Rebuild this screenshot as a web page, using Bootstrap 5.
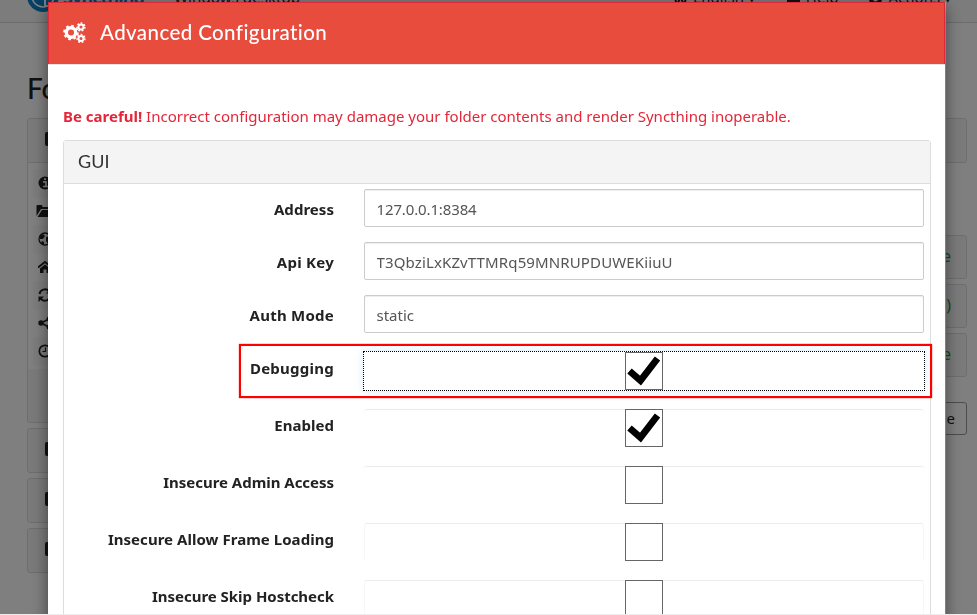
<!DOCTYPE html>
<html lang="en">
<head>
<meta charset="utf-8">
<meta name="viewport" content="width=device-width, initial-scale=1">
<title>Advanced Configuration</title>
<link href="https://cdn.jsdelivr.net/npm/bootstrap@5.3.0/dist/css/bootstrap.min.css" rel="stylesheet">
<style>
html,body{height:615px;overflow:hidden}
body{font-family:"Noto Sans","Open Sans",sans-serif;font-size:15px;color:#222;background:#fff}
.topbar{height:23px;background:#f8f8f8;border-bottom:1px solid #d8d8d8;padding:0 25px 0 27px;overflow:hidden}
.topbar .strip{margin-top:-20px;height:32px;white-space:nowrap}
.topbar .strip span{padding-top:2px}
.brandname{color:#0882c8;font-weight:700;font-size:18px;width:111px;letter-spacing:-.9px}
.host{font-size:15.2px}
.menuitem svg{width:15px;height:15px;margin-right:5px}
.menus{gap:30px}
.page{padding:0 10px 0 27px}
.title-lg{font-family:Lato,sans-serif;font-size:28px;line-height:36px;margin-top:47px;margin-bottom:12px}
.leftcol,.rightcol{width:455px}
.box{border:1px solid #ddd;border-radius:3px;background:#f5f5f5;height:45px;margin-bottom:5px;padding:0 15px 0 17px}
.rightcol .box{padding-bottom:3px}
.box.tall{height:305px;padding:0}
.box .chip{width:14px;height:14px;border-radius:2px;background:#222;margin-bottom:3px}
.boxtop{height:43px;padding:0 17px}
.facts{background:#fff;border-top:1px solid #ddd;height:207px;padding:6px 5px 0}
.facts>div{height:28px;padding:0 5px}
.facts>div:nth-child(odd){background:#f9f9f9}
.facts svg{width:14px;height:14px}
.rightcol{padding-top:95px}
.box.gapabove{margin-top:72px}
.rightcol .box+.box{height:44px}
.state{color:#1a9c3c;font-size:16px}
.devbtn{height:33px;width:150px;border:1px solid #999;border-radius:3px;padding-right:11px;margin-top:25px}
.shade{background:rgba(0,0,0,.5);z-index:1040}
.dialog-area{z-index:1050;padding:2px 32px 0 48px;overflow:hidden}
.sheet{height:640px;background:#fff;border-radius:0;border:0;box-shadow:0 5px 15px rgba(0,0,0,.5),1px 0 0 #aaa}
.sheet-head{height:62px;background:#e84c3d;border:1px solid #e0283a;border-bottom:0;color:#fff;padding:0 14px 2px}
.sheet-head h4{font-family:Lato,sans-serif;font-size:20.5px;letter-spacing:.4px;margin:0 0 0 13px}
.sheet-body{border-top:1px solid #e5e5e5;padding:40px 14px 0 15px}
.warn{color:#e42638;line-height:22px;margin-bottom:13px;white-space:nowrap}
.panelbox{border:1px solid #ddd;border-radius:3px 3px 0 0;height:520px}
.panelbox-head{height:43px;background:#f4f4f4;border-bottom:1px solid #ddd;padding:0 14px 2px;font-family:Lato,sans-serif;font-size:18px;color:#333}
.fields{padding-top:5px}
.field{height:53px}
.field.toggle{height:57px}
.field label{width:270px;font-weight:700;text-align:right;line-height:22px;padding-top:9px;white-space:nowrap;letter-spacing:.04px}
.field label.wide{letter-spacing:.25px}
.field label.tight{letter-spacing:-.03px}
.field .form-control{width:560px;height:38px;margin-left:30px;border:1px solid #ccc;border-radius:2px;padding:2px 12px 0 11.5px;font-size:15px;color:#555;box-shadow:inset 0 1px 1px rgba(0,0,0,.075);font-family:inherit}
#f1{letter-spacing:-.13px}
#f2{letter-spacing:.13px}
.slot{width:560px;height:38px;margin:4px 0 0 30px;border-top:1px solid #ececec;border-radius:3px}
.slot.sides{border-left:1px solid #f7f7f7;border-right:1px solid #f7f7f7}
.tick{width:38px;height:38px;border:1px solid #666;background:#fff;margin-top:-1px}
.slot.focus{border:1px dotted #000;width:562px;height:40px;margin:3px -1px 0 29px;border-radius:0;box-shadow:0 0 8px rgba(102,175,233,.25)}
.slot.focus .tick{margin-top:0}
.hilite{position:absolute;left:239px;top:344px;width:693px;height:54px;border:2px solid #f00;box-shadow:0 0 1px #f00;z-index:1060}
.endline{height:1px;background:#ededed;z-index:1070}
</style>
<script src="https://cdn.jsdelivr.net/npm/bootstrap@5.3.0/dist/js/bootstrap.bundle.min.js"></script>
</head>
<body>
<svg width="0" height="0" class="position-absolute"><defs>
<symbol id="check" viewBox="0 0 36 36"><path d="M3.500 18 14.500 27.500 31.500 5.500" fill="none" stroke="#000" stroke-width="6.800"/></symbol>
</defs></svg>
<nav class="topbar"><div class="strip d-flex align-items-center">
<svg width="32" height="32" viewBox="0 0 32 32" class="flex-shrink-0 me-1"><circle cx="16" cy="16" r="16" fill="#0882c8"/><circle cx="16" cy="16" r="11" fill="none" stroke="#fff" stroke-width="1.6"/><path d="M6 12 18 18 25 9M18 18v8" stroke="#fff" stroke-width="2" fill="none"/></svg>
<span class="brandname">Syncthing</span><span class="host">Windows desktop</span>
<div class="menus d-flex ms-auto">
<span class="menuitem"><svg viewBox="0 0 15 15"><path d="M1 4 4 14 7.500 6 11 14 14 4" fill="none" stroke="#222" stroke-width="2"/></svg>English ▾</span>
<span class="menuitem"><svg viewBox="0 0 15 15"><rect x="1" y="3" width="13" height="11" rx="2" fill="#222"/></svg>Help</span>
<span class="menuitem"><svg viewBox="0 0 15 15"><circle cx="7.500" cy="8" r="4.500" fill="none" stroke="#222" stroke-width="4"/></svg>Actions ▾</span>
</div>
</div></nav>
<main class="page d-flex justify-content-between">
<section class="leftcol">
<h3 class="title-lg">Fo</h3>
<div class="box tall"><div class="boxtop d-flex align-items-center"><span class="chip"></span></div>
<div class="facts">
<div class="d-flex align-items-center"><svg viewBox="0 0 14 14"><circle cx="7" cy="7" r="6.500" fill="#222"/><path d="M5 5.800h3v4.400M5 10.500h5M6 3.200h2" stroke="#fff" stroke-width="1.700" fill="none"/></svg></div>
<div class="d-flex align-items-center"><svg viewBox="0 0 14 14" overflow="visible"><path d="M-1.500 12V2q0-1 1-1h4q1 0 1 2h7v2H3z M-.5 13 4 6h13l-4 7z" fill="#222"/></svg></div>
<div class="d-flex align-items-center"><svg viewBox="0 0 14 14"><circle cx="7" cy="7" r="6" fill="none" stroke="#222" stroke-width="1.300"/><path d="M2 4 5 2 7 4 5 7 2 7zM8 5l4-1 1 4-3 4-2-3zM4 9l2 1v3l-3-2z" fill="#222"/></svg></div>
<div class="d-flex align-items-center"><svg viewBox="0 0 14 14"><path d="M0 7.500 7 2l7 5.500" fill="none" stroke="#222" stroke-width="1.800"/><path d="M2 8.500 7 4.500l5 4V13H8.500V9.500h-3V13H2z" fill="#222"/></svg></div>
<div class="d-flex align-items-center"><svg viewBox="0 0 14 14"><path d="M1.500 6A5.500 5.500 0 0 1 11 3.200M12.500 8A5.500 5.500 0 0 1 3 10.800" fill="none" stroke="#222" stroke-width="2"/><path d="M13.500 0v5.500H8zM.5 14V8.500H6z" fill="#222"/></svg></div>
<div class="d-flex align-items-center"><svg viewBox="0 0 14 14"><path d="M11 3 3 7l8 4" fill="none" stroke="#222" stroke-width="1.800"/><circle cx="3" cy="7" r="2.700" fill="#222"/><circle cx="11" cy="3" r="2.500" fill="#222"/><circle cx="11" cy="11" r="2.500" fill="#222"/></svg></div>
<div class="d-flex align-items-center"><svg viewBox="0 0 14 14"><circle cx="7" cy="7" r="5.700" fill="none" stroke="#222" stroke-width="1.700"/><path d="M7.500 3.500V7.500H4.500" fill="none" stroke="#222" stroke-width="1.200"/></svg></div>
</div></div>
<div class="box d-flex align-items-center"><span class="chip"></span></div>
<div class="box d-flex align-items-center"><span class="chip"></span></div>
<div class="box d-flex align-items-center"><span class="chip"></span></div>
</section>
<section class="rightcol">
<div class="box"></div>
<div class="box gapabove d-flex align-items-center justify-content-end"><span class="state">e</span></div>
<div class="box d-flex align-items-center justify-content-end"><span class="state">)</span></div>
<div class="box d-flex align-items-center justify-content-end"><span class="state">e</span></div>
<div class="devbtn ms-auto d-flex align-items-center justify-content-end">ce</div>
</section>
</main>
<div class="shade position-fixed top-0 start-0 w-100 h-100"></div>
<div class="dialog-area position-fixed top-0 start-0 w-100 h-100">
<div class="sheet">
<div class="sheet-head d-flex align-items-center">
<svg width="24" height="22" viewBox="0 0 24 22" fill="none" stroke="#fff"><circle cx="8" cy="10.500" r="4.700" stroke-width="3.400"/><circle cx="8" cy="10.500" r="6.700" stroke-width="2.200" stroke-dasharray="2.631"/><circle cx="18" cy="5" r="2.500" stroke-width="1.900"/><circle cx="18" cy="5" r="3.900" stroke-width="1.500" stroke-dasharray="1.750"/><circle cx="18" cy="16.500" r="2.500" stroke-width="1.900"/><circle cx="18" cy="16.500" r="3.900" stroke-width="1.500" stroke-dasharray="1.750"/></svg>
<h4>Advanced Configuration</h4></div>
<div class="sheet-body">
<p class="warn"><strong>Be careful!</strong> <span>Incorrect configuration may damage your folder contents and render Syncthing inoperable.</span></p>
<div class="panelbox">
<div class="panelbox-head d-flex align-items-center">GUI</div>
<div class="fields">
<div class="field d-flex"><label for="f1">Address</label><input id="f1" class="form-control" value="127.0.0.1:8384"></div>
<div class="field d-flex"><label for="f2" class="wide">Api Key</label><input id="f2" class="form-control" value="T3QbziLxKZvTTMRq59MNRUPDUWEKiiuU"></div>
<div class="field d-flex"><label for="f3" class="wide">Auth Mode</label><input id="f3" class="form-control" value="static"></div>
<div class="field toggle d-flex"><label class="wide">Debugging</label><div class="slot focus d-flex justify-content-center"><span class="tick"><svg class="d-block" width="36" height="36"><use href="#check"/></svg></span></div></div>
<div class="field toggle d-flex"><label>Enabled</label><div class="slot d-flex justify-content-center"><span class="tick"><svg class="d-block" width="36" height="36"><use href="#check"/></svg></span></div></div>
<div class="field toggle d-flex"><label class="tight">Insecure Admin Access</label><div class="slot d-flex justify-content-center"><span class="tick"></span></div></div>
<div class="field toggle d-flex"><label>Insecure Allow Frame Loading</label><div class="slot sides d-flex justify-content-center"><span class="tick"></span></div></div>
<div class="field toggle d-flex"><label class="tight">Insecure Skip Hostcheck</label><div class="slot sides d-flex justify-content-center"><span class="tick"></span></div></div>
</div></div></div></div></div>
<div class="hilite"></div>
<div class="endline position-fixed bottom-0 start-0 w-100"></div>
</body>
</html>
